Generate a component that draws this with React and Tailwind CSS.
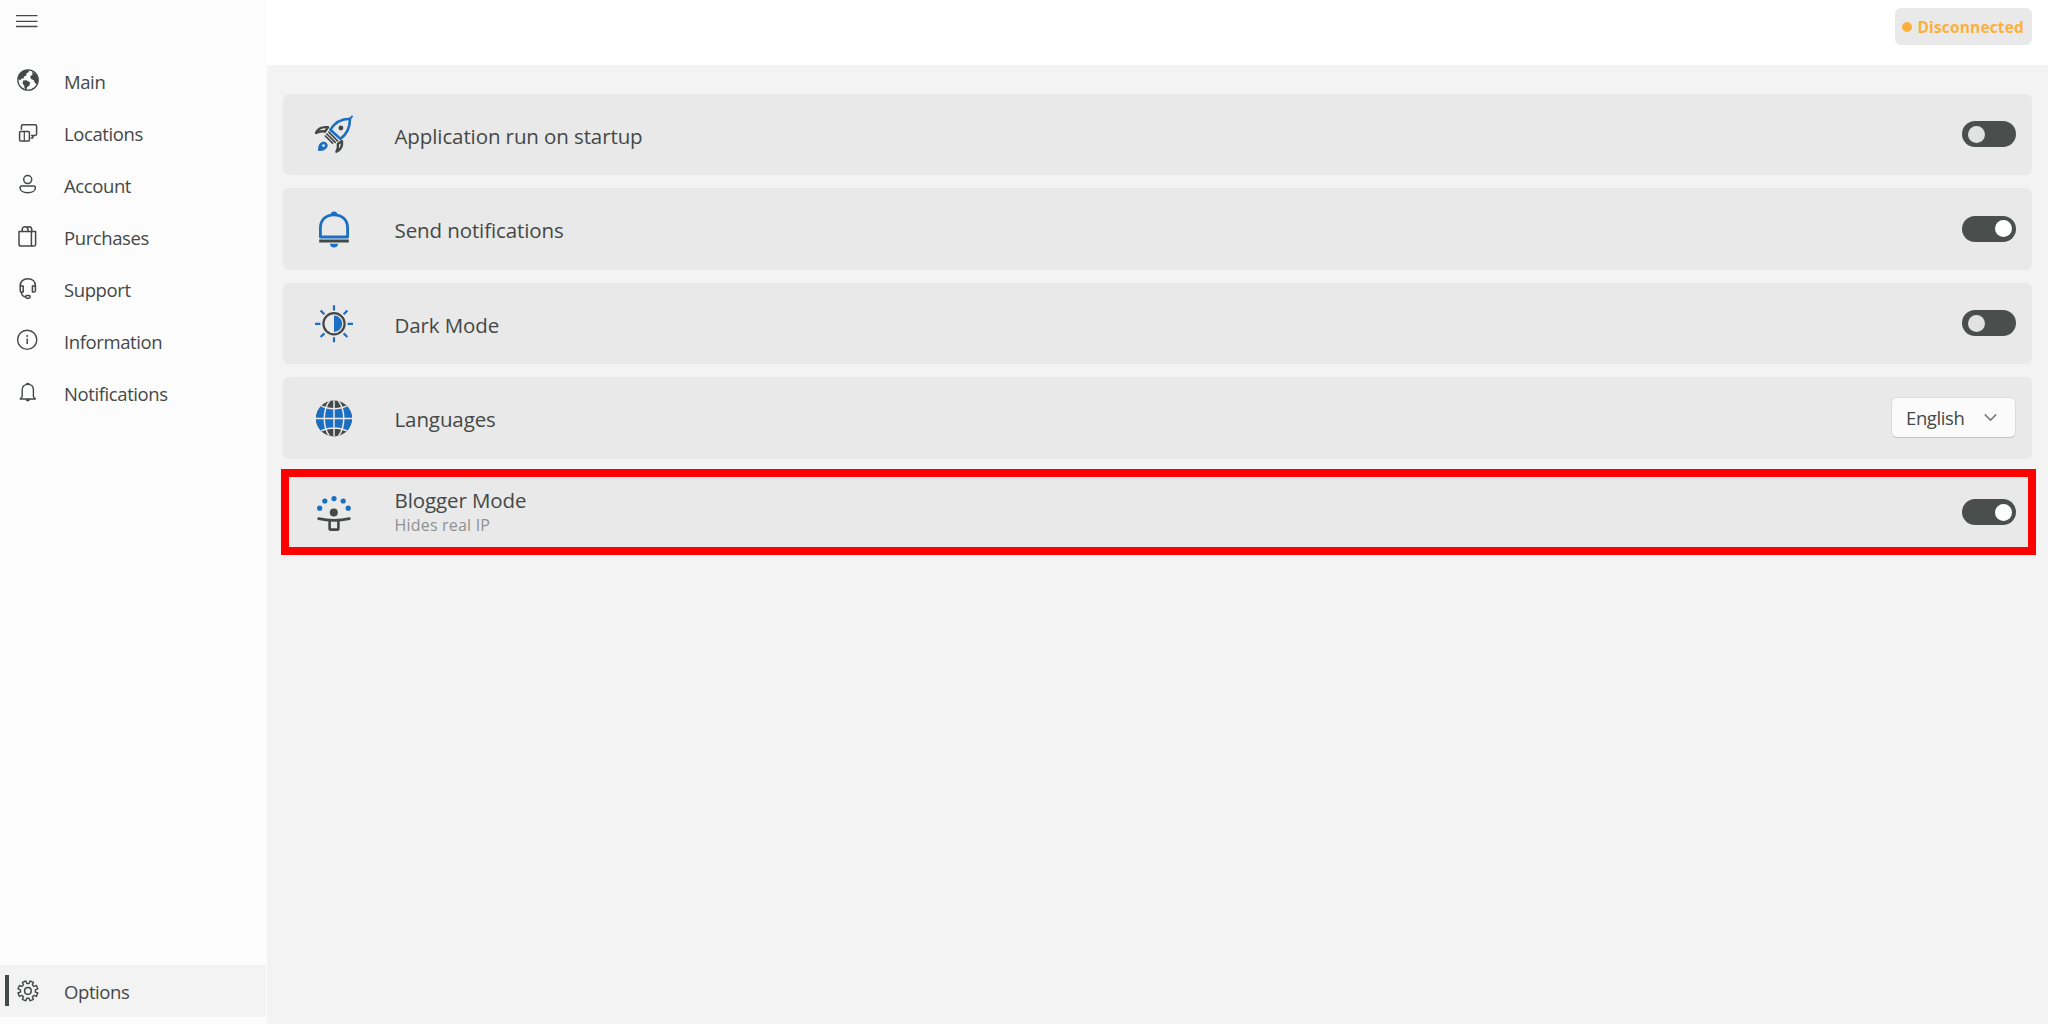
import React, { useState } from 'react';
import clsx from 'clsx';
import { ChevronDown } from 'lucide-react';

const BLUE = '#1b6ec2';
const DARK = '#444846';

const NavSvg = ({ children }) => (
  <svg viewBox="0 0 24 24" className="w-6 h-6 shrink-0" fill="none" stroke={DARK} strokeWidth="1.5" strokeLinecap="round" strokeLinejoin="round">
    {children}
  </svg>
);

const CardSvg = ({ children }) => (
  <svg viewBox="0 0 40 40" className="w-10 h-10 shrink-0" fill="none" stroke={DARK} strokeWidth="2.4" strokeLinejoin="round">
    {children}
  </svg>
);

const MainIcon = () => (
  <NavSvg>
    <circle cx="12" cy="12" r="10.2" strokeWidth="1.3" />
    <g fill={DARK} stroke="none">
      <path d="M2 10.5 L4.5 5 L9 2 L13.2 2.2 L12.6 4.2 L10.6 5.2 L10.4 7.4 L8 8.6 L7.6 10.4 L5.6 10.6 L4 12.4 Z" />
      <path d="M16 3.4 L20.2 6.6 L22.2 12 L20.8 16.6 L18.6 14.6 L17.9 12.2 L15 11 L14.2 8.6 L16.6 6.6 Z" />
      <path d="M7.2 12.6 L10.4 12.2 L14.2 14.6 L13.4 17.4 L11.2 19 L10.4 21.8 L8.6 20.6 L8.2 17.4 L6.6 15.4 Z" />
    </g>
  </NavSvg>
);

const LocationsIcon = () => (
  <NavSvg>
    <path d="M5.4 9.2 V6.2 Q5.4 4.8 6.8 4.8 H19.2 Q20.6 4.8 20.6 6.2 V14 Q20.6 15.4 19.2 15.4 H15.6" />
    <path d="M16.8 15.8 V18 H15.2" />
    <rect x="3.6" y="11.6" width="9.8" height="9.4" rx="1" />
    <path d="M8.3 12 V20.8" strokeWidth="1.2" />
  </NavSvg>
);

const AccountIcon = () => (
  <NavSvg>
    <circle cx="11.7" cy="7.6" r="4" />
    <path d="M5.6 13.9 H17.8 Q19.4 13.9 19.4 15.4 C19.4 19 15.8 20.8 11.7 20.8 C7.6 20.8 4 19 4 15.4 Q4 13.9 5.6 13.9 Z" />
  </NavSvg>
);

const PurchasesIcon = () => (
  <NavSvg>
    <path d="M3 7.6 H19.6 V20.4 Q19.6 22 18 22 H4.8 Q3 22 3 20.2 Z" />
    <path d="M15.4 7.8 V21.8" />
    <path d="M6.2 7.4 V6 Q6.2 2.8 9.2 2.8 Q12 2.8 12 6 V7.4" />
    <path d="M10.8 3.6 Q11.8 2.8 13 2.8 Q15.8 2.8 15.8 6 V7.4" />
  </NavSvg>
);

const SupportIcon = () => (
  <NavSvg>
    <path d="M4.2 10 C4.2 5.4 7.4 2.8 11.8 2.8 C16.2 2.8 19.4 5.4 19.4 10" />
    <path d="M4.2 10 H7.2 V16 H5.6 Q4.2 16 4.2 14.4 Z" />
    <path d="M19.4 10 H16.4 V16 H18 Q19.4 16 19.4 14.4 Z" />
    <path d="M5.4 16.2 C5.6 19 7.2 20.6 9.4 20.8" />
    <rect x="9.6" y="19.4" width="4.6" height="2.8" rx="1.4" />
  </NavSvg>
);

const InfoIcon = () => (
  <NavSvg>
    <circle cx="11.2" cy="11.8" r="9.6" strokeWidth="1.4" />
    <path d="M11.2 10.6 V16" strokeLinecap="butt" />
    <circle cx="11.2" cy="8" r="1" fill={DARK} stroke="none" />
  </NavSvg>
);

const BellIcon = () => (
  <NavSvg>
    <path d="M4.2 19 L6.2 16.6 V10 C6.2 6.4 8.4 4.4 11.8 4.4 C15.2 4.4 17.4 6.4 17.4 10 V16.6 L19.4 19 Z" strokeWidth="1.4" />
    <path d="M10.2 4.2 Q11.8 2.4 13.4 4.2 Z" fill={DARK} strokeWidth="1.2" />
    <path d="M10 20 Q11.8 22.4 13.6 20 Z" fill={DARK} strokeWidth="1" />
  </NavSvg>
);

// eight teeth, with a notch at the top
const gearPoints = Array.from({ length: 8 })
  .flatMap((_, i) => {
    const mid = 22.5 + i * 45;
    return [
      [mid - 14, 7.5],
      [mid - 10.5, 10.1],
      [mid + 10.5, 10.1],
      [mid + 14, 7.5],
    ];
  })
  .map(([deg, r]) => {
    const a = (deg * Math.PI) / 180;
    return `${(11.9 + r * Math.cos(a)).toFixed(2)},${(11.9 + r * Math.sin(a)).toFixed(2)}`;
  })
  .join(' ');

const GearIcon = () => (
  <NavSvg>
    <polygon points={gearPoints} strokeWidth="1.4" />
    <circle cx="11.9" cy="11.9" r="3.3" strokeWidth="1.5" />
  </NavSvg>
);

const RocketIcon = () => (
  <CardSvg>
    <g transform="translate(0 0.7)">
      <path d="M16.4 15 C20.4 8 27 4.2 36 4 C36 12.6 32.6 19.6 26.4 24.2 Z" stroke={BLUE} strokeWidth="2.6" />
      <path d="M35.8 4.2 L38.6 1.2" stroke={BLUE} strokeWidth="1.8" />
      <circle cx="26.9" cy="13.3" r="2.4" fill={DARK} stroke="none" />
      <path d="M14.4 17 L24 26.6 M12.4 18.8 L21.8 28.2 M10.8 20.8 L19 29" strokeWidth="1.7" />
      <path d="M2 18.2 C4.2 13.6 8.2 11.8 14 12.6 L11 16.8 C7.4 16 4.8 16.6 2 18.2 Z" strokeWidth="2.4" />
      <path d="M22.4 37 C26.6 35.2 28.6 31.6 28 26.4 L23.8 29.2 C24.4 32.2 23.8 34.6 22.4 37 Z" strokeWidth="2.4" />
      <path d="M4.6 35.8 C4.4 31 6 27.4 9.6 27.4 C12 27.4 13.4 29.2 13.2 31 C12.8 34.4 9.4 35.8 4.6 35.8 Z" stroke={BLUE} fill={BLUE} strokeWidth="1" />
      <circle cx="9.5" cy="30.9" r="1.4" fill="#e9e9e9" stroke="none" />
    </g>
  </CardSvg>
);

const NotifyIcon = () => (
  <CardSvg>
    <path d="M6.4 28 V19 C6.4 10.6 12 5.8 20 5.8 C28 5.8 33.6 10.6 33.6 19 V28 Z" stroke={BLUE} strokeWidth="2.8" />
    <path d="M17 5 Q17 2.6 20 2.6 Q23 2.6 23 5 Z" fill={BLUE} stroke="none" />
    <path d="M5.2 32 H34.8" strokeWidth="3" />
    <path d="M15.8 34.8 H24.2 C23.6 37.4 22 38.6 20 38.6 C18 38.6 16.4 37.4 15.8 34.8 Z" fill={BLUE} stroke="none" />
  </CardSvg>
);

const DarkModeIcon = () => (
  <CardSvg>
    <circle cx="20" cy="20.8" r="10.6" strokeWidth="2.2" />
    <path d="M20 12.6 A8.2 8.2 0 0 1 20 29 Z" fill={BLUE} stroke="none" />
    <path
      d="M20 2.2 V7.4 M20 34.2 V39.2 M1 20.8 H6.4 M33.6 20.8 H39 M6.6 7.6 L10.4 11.2 M33.4 7.6 L29.6 11.2 M6.6 34 L10.4 30.4 M33.4 34 L29.6 30.4"
      stroke={BLUE}
      strokeWidth="2.2"
    />
  </CardSvg>
);

const LanguagesIcon = () => (
  <CardSvg>
    <defs>
      <clipPath id="globe">
        <circle cx="20" cy="20.4" r="18" />
      </clipPath>
    </defs>
    <g clipPath="url(#globe)">
      <rect width="40" height="40" fill={DARK} stroke="none" />
      <path d="M0 4.8 L7 7.6 Q20 14 33 7.6 L40 4.8 V36 L33 33.2 Q20 26.8 7 33.2 L0 36 Z" fill={BLUE} stroke="none" />
      <g stroke="#e9e9e9" strokeWidth="1.5">
        <path d="M20 0 V40 M0 20.4 H40 M5 6.8 Q20 14.6 35 6.8 M5 34 Q20 26.2 35 34" />
        <path d="M17 1 C8 11 8 30 17 40 M23 1 C32 11 32 30 23 40" />
      </g>
    </g>
  </CardSvg>
);

const BloggerIcon = () => (
  <CardSvg>
    <g fill={BLUE} stroke="none">
      <circle cx="5.7" cy="16.2" r="2.6" />
      <circle cx="10.8" cy="9" r="2.6" />
      <circle cx="20" cy="6.6" r="2.6" />
      <circle cx="29.2" cy="9" r="2.6" />
      <circle cx="34.2" cy="16.2" r="2.6" />
    </g>
    <circle cx="19.8" cy="20.6" r="4" fill={DARK} stroke="none" />
    <path d="M4.6 26.6 Q20 30 35.4 26.6" strokeLinecap="round" strokeWidth="2.7" />
    <path d="M15.6 29 V36.4 Q15.6 37.6 16.8 37.6 H23.2 Q24.4 37.6 24.4 36.4 V29" strokeWidth="2.6" />
  </CardSvg>
);

const navItems = [
  { label: 'Main', Icon: MainIcon },
  { label: 'Locations', Icon: LocationsIcon },
  { label: 'Account', Icon: AccountIcon },
  { label: 'Purchases', Icon: PurchasesIcon },
  { label: 'Support', Icon: SupportIcon },
  { label: 'Information', Icon: InfoIcon },
  { label: 'Notifications', Icon: BellIcon },
];

const NavItem = ({ label, Icon, active }) => (
  <button className={clsx('relative flex items-center w-[266px] h-[52px] pl-4 text-left', active && 'bg-[#f3f3f3]')}>
    {active && <span className="absolute left-[5px] top-[10px] w-1 h-[31px] bg-[#444846]" />}
    <Icon />
    <span className={clsx('ml-6 text-[18.5px] tracking-[-0.4px]', active ? 'pt-px' : 'pt-[3px]')}>{label}</span>
  </button>
);

const Toggle = ({ on, onClick }) => (
  <button
    onClick={onClick}
    className={clsx('flex items-center w-[54px] h-[26px] rounded-full bg-[#4a4e4c]', on ? 'justify-end pr-[4px]' : 'justify-start pl-[5.5px]')}
  >
    <span className={clsx('w-[17px] h-[17px] rounded-full', on ? 'bg-white' : 'bg-[#e2e2e2]')} />
  </button>
);

const Card = ({ Icon, title, subtitle, highlight, children }) => (
  <div className="relative flex items-center h-[81.5px] pl-[31px] pr-4 bg-[#e9e9e9] rounded-md">
    {highlight && <div className="absolute -left-[2px] -right-[4px] -top-[2.5px] h-[86px] border-8 border-[#ff0000]" />}
    <Icon />
    <div className="ml-[40.5px] flex-1">
      <div className={clsx('text-[20.5px] leading-[26px] tracking-[-0.1px]', !subtitle && 'pt-[3px]')}>{title}</div>
      {subtitle && <div className="text-[16px] leading-[25px] tracking-[0.2px] text-[#8f9192]">{subtitle}</div>}
    </div>
    {children}
  </div>
);

export default function App() {
  const [settings, setSettings] = useState({ startup: false, notifications: true, dark: false, blogger: true });

  const toggle = (key) => setSettings((prev) => ({ ...prev, [key]: !prev[key] }));

  return (
    <div className="flex w-full h-screen overflow-hidden bg-[#f3f3f3] text-[#444846] font-['Open_Sans','Noto_Sans',sans-serif]">
      <aside className="flex flex-col w-[267px] shrink-0 bg-[#fcfcfc] pb-[7px]">
        <button className="h-[54px] pl-4 pt-[14px] flex items-start">
          <svg viewBox="0 0 22 14" className="w-[22px] h-[14px]" stroke={DARK} strokeWidth="1.3">
            <path d="M0 1.7 H21.5 M0 7.3 H21.5 M0 12.5 H21.5" />
          </svg>
        </button>
        <nav className="flex-1">
          {navItems.map((item) => (
            <NavItem key={item.label} {...item} />
          ))}
        </nav>
        <NavItem label="Options" Icon={GearIcon} active />
      </aside>

      <div className="flex-1 flex flex-col">
        <header className="flex justify-end h-[65px] bg-white pt-[8px] pr-4">
          <div className="flex items-center w-[137px] h-[37px] bg-[#e9e9e9] rounded-md pl-[6.5px]">
            <span className="w-[10px] h-[10px] rounded-full bg-[#fbb03b]" />
            <span className="ml-[6px] pt-[3px] text-[15.5px] font-bold text-[#fbb03b] tracking-[0.15px]">Disconnected</span>
          </div>
        </header>

        <main className="flex flex-col gap-[13px] pl-4 pr-4 pt-[28.5px]">
          <Card Icon={RocketIcon} title="Application run on startup">
            <Toggle on={settings.startup} onClick={() => toggle('startup')} />
          </Card>
          <Card Icon={NotifyIcon} title="Send notifications">
            <Toggle on={settings.notifications} onClick={() => toggle('notifications')} />
          </Card>
          <Card Icon={DarkModeIcon} title="Dark Mode">
            <Toggle on={settings.dark} onClick={() => toggle('dark')} />
          </Card>
          <Card Icon={LanguagesIcon} title="Languages">
            <button className="flex items-center justify-between w-[125px] h-[41px] pl-[14px] pr-[14px] bg-[#fbfbfb] border border-[#dcdcdc] border-b-[#c4c4c4] rounded-md">
              <span className="pt-px text-[18.5px] tracking-[-0.4px]">English</span>
              <ChevronDown className="w-[21px] h-[21px] text-[#7a7c7b]" strokeWidth={1.8} />
            </button>
          </Card>
          <Card Icon={BloggerIcon} title="Blogger Mode" subtitle="Hides real IP" highlight>
            <Toggle on={settings.blogger} onClick={() => toggle('blogger')} />
          </Card>
        </main>
      </div>
    </div>
  );
}
